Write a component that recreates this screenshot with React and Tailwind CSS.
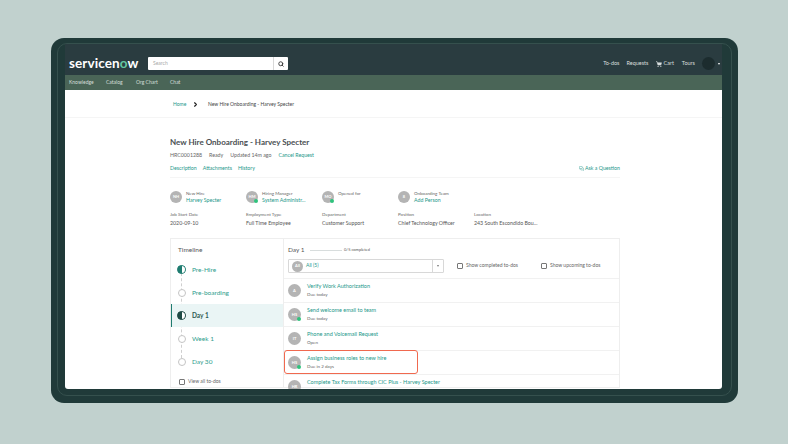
import { Search, ShoppingCart, ChevronRight, MessagesSquare } from 'lucide-react';

const people = [
  { initials: 'NH', label: 'New Hire', value: 'Harvey Specter', online: false },
  { initials: 'HM', label: 'Hiring Manager', value: 'System Administr...', online: true },
  { initials: 'MO', label: 'Opened for', value: '', online: true },
  { initials: '8', label: 'Onboarding Team', value: 'Add Person', online: false },
];

const facts = [
  { label: 'Job Start Date', value: '2020-09-10' },
  { label: 'Employment Type', value: 'Full Time Employee' },
  { label: 'Department', value: 'Customer Support' },
  { label: 'Position', value: 'Chief Technology Officer' },
  { label: 'Location', value: '243 South Escondido Bou...' },
];

const stages = [
  { name: 'Pre-Hire', state: 'half' },
  { name: 'Pre-boarding', state: 'empty' },
  { name: 'Day 1', state: 'active' },
  { name: 'Week 1', state: 'empty' },
  { name: 'Day 30', state: 'empty' },
];

const todos = [
  { initials: 'A', title: 'Verify Work Authorization', sub: 'Due today', online: false },
  { initials: 'HS', title: 'Send welcome email to team', sub: 'Due today', online: true },
  { initials: 'IT', title: 'Phone and Voicemail Request', sub: 'Open', online: false },
  { initials: 'HS', title: 'Assign business roles to new hire', sub: 'Due in 2 days', online: true, highlight: true },
  { initials: 'HR', title: 'Complete Tax Forms through CIC Plus - Harvey Specter', sub: 'Due today', online: false },
];

const Avatar = ({ initials, online, size = 'w-[12px] h-[12px]' }) => (
  <div className={`relative shrink-0 rounded-full bg-[#b4b4b4] text-white flex items-center justify-center text-[4px] font-bold ${size}`}>
    {initials}
    {online && <span className="absolute right-0 bottom-0 w-[4px] h-[4px] rounded-full bg-[#2fc27c]" />}
  </div>
);

const StageDot = ({ state }) => {
  if (state === 'empty') {
    return (
      <span className="relative z-10 w-[9px] flex justify-center">
        <span className="block w-[8px] h-[8px] rounded-full border border-[#c4c4c4] bg-white" />
      </span>
    );
  }
  const color = state === 'active' ? 'bg-[#1f4a45] border-[#1f4a45]' : 'bg-[#1f7c70] border-[#1f7c70]';
  return (
    <span className={`relative z-10 block w-[9px] h-[9px] rounded-full border-[1.5px] overflow-hidden ${color}`}>
      <span className="absolute right-0 top-0 bottom-0 w-1/2 bg-white" />
    </span>
  );
};

export default function App() {
  return (
    <div className="w-[788px] h-[444px] overflow-hidden bg-[#c1d1ce] pt-[38px] pl-[51px] font-['Lato','Open_Sans',sans-serif]">
      {/* Bezel */}
      <div className="w-[687px] h-[365px] rounded-[13px] bg-[#203a39] pt-[5px] px-[6px] pb-[7px]">
        <div className="h-full rounded-[10px] border border-[#35504d] pl-[7px] pr-[9px] pb-[6px]">
          <div className="h-full overflow-hidden rounded-b-[3px] bg-white flex flex-col">
            {/* Header */}
            <div className="h-[31px] shrink-0 bg-[#2a3c40] flex items-center pt-[8px] pl-[4px] pr-[2px]">
              <div className="w-[79px] text-white text-[13.5px] leading-none font-bold tracking-[0.1px]">
                servicen<span className="text-[#63c7a0]">o</span>w
              </div>
              <div className="w-[140px] h-[13px] bg-white rounded-[1px] flex items-center">
                <span className="flex-1 pl-[5px] text-[5px] text-[#a8a8a8]">Search</span>
                <span className="w-[15px] h-full border-l border-[#d8d8d8] flex items-center justify-center">
                  <Search className="w-[6px] h-[6px] text-[#333]" strokeWidth={3.5} />
                </span>
              </div>
              <div className="ml-auto flex items-center text-[5.5px] text-[#d9dfdf]">
                <span>To-dos</span>
                <span className="ml-[7px]">Requests</span>
                <span className="ml-[8px] flex items-center gap-[1px]">
                  <ShoppingCart className="w-[6px] h-[6px]" fill="currentColor" />
                  Cart
                </span>
                <span className="ml-[8px]">Tours</span>
                <span className="ml-[7px] w-[13px] h-[13px] rounded-full bg-[#1c2c2e]" />
                <span className="ml-[3px] w-0 h-0 border-x-[1.5px] border-x-transparent border-t-[2px] border-t-white" />
              </div>
            </div>

            {/* Nav */}
            <div className="h-[15px] shrink-0 bg-[#4a6557] flex items-center pt-[1px] pl-[4px] text-[5px] text-[#d5dfd9]">
              <span className="w-[37px]">Knowledge</span>
              <span className="w-[30px]">Catalog</span>
              <span className="w-[34px]">Org Chart</span>
              <span>Chat</span>
            </div>

            {/* Breadcrumb */}
            <div className="h-[28px] shrink-0 border-b border-[#f5f5f5] flex items-center pl-[108px] pt-[2px] text-[5px] text-[#444]">
              <span className="w-[19px] text-[#23978a]">Home</span>
              <ChevronRight className="w-[7px] h-[7px] text-[#222]" strokeWidth={4} />
              <span className="ml-[9px]">New Hire Onboarding - Harvey Specter</span>
            </div>

            {/* Record */}
            <div className="w-[450px] ml-[105px]">
              <h1 className="mt-[18px] text-[8px] leading-[12px] font-bold text-[#4a5052]">
                New Hire Onboarding - Harvey Specter
              </h1>
              <div className="mt-[3px] flex gap-[7px] text-[5.25px] leading-[8px] text-[#666]">
                <span>HRC0001288</span>
                <span>Ready</span>
                <span>Updated 14m ago</span>
                <span className="text-[#23978a]">Cancel Request</span>
              </div>
              <div className="mt-[5px] pb-[5px] border-b border-[#f5f5f5] flex items-center gap-[6px] text-[5.25px] leading-[8px] text-[#23978a]">
                <span>Description</span>
                <span>Attachments</span>
                <span>History</span>
                <span className="ml-auto flex items-center gap-[1px]">
                  <MessagesSquare className="w-[5px] h-[5px]" />
                  Ask a Question
                </span>
              </div>

              {/* People */}
              <div className="mt-[12px] flex">
                {people.map((p) => (
                  <div key={p.label} className="w-[76px] flex items-center gap-[4px]">
                    <Avatar initials={p.initials} online={p.online} />
                    <div className="text-[4.5px] leading-[7px] text-[#666]">
                      <div>{p.label}</div>
                      <div className="text-[5.25px] text-[#23978a] whitespace-nowrap">{p.value || '\u00a0'}</div>
                    </div>
                  </div>
                ))}
              </div>
              <div className="mt-[7px] flex">
                {facts.map((f) => (
                  <div key={f.label} className="w-[76px] text-[4.5px] leading-[7px] text-[#666] whitespace-nowrap">
                    <div>{f.label}</div>
                    <div className="mt-[2px] text-[5.25px] text-[#555]">{f.value}</div>
                  </div>
                ))}
              </div>

              {/* To-do card */}
              <div className="mt-[11px] h-[150px] border border-[#eeeeee] flex">
                <div className="w-[113px] shrink-0 border-r border-[#eeeeee]">
                  <div className="pl-[7px] pt-[6px] text-[6.5px] leading-[9px] text-[#555]">Timeline</div>
                  <div className="relative mt-[4px]">
                    <div className="absolute left-[10px] top-[10px] h-[90px] border-l border-dashed border-[#cfcfcf]" />
                    {stages.map((s) => (
                      <div
                        key={s.name}
                        className={`relative h-[23px] flex items-center gap-[6px] text-[6.5px] ${
                          s.state === 'active' ? 'bg-[#eaf5f5] border-l border-[#1f7c70] pl-[5px] text-[#2f5a52] font-bold' : 'pl-[6px] text-[#2f9d8d]'
                        }`}
                      >
                        <StageDot state={s.state} />
                        {s.name}
                      </div>
                    ))}
                  </div>
                  <div className="mt-[5px] pl-[8px] flex items-center gap-[3px] text-[5px] text-[#666]">
                    <span className="w-[6px] h-[6px] border border-[#777] rounded-[1px]" />
                    View all to-dos
                  </div>
                </div>

                <div className="flex-1 min-w-0">
                  <div className="pl-[4px] pt-[7px] flex items-center h-[15px] text-[#555]">
                    <span className="text-[6.5px] w-[22px]">Day 1</span>
                    <span className="w-[32px] h-[1px] bg-[#d8dddd]" />
                    <span className="ml-[2px] text-[4px]">0/5 completed</span>
                  </div>
                  <div className="mt-[5px] pl-[4px] flex items-center">
                    <div className="w-[156px] h-[14px] border border-[#d8d8d8] rounded-[1px] flex items-center">
                      <div className="flex-1 flex items-center gap-[3px] pl-[3px] text-[5px] text-[#23978a]">
                        <Avatar initials="All" size="w-[11px] h-[11px]" />
                        All (5)
                      </div>
                      <span className="w-[11px] h-full border-l border-[#d8d8d8] flex items-center justify-center">
                        <span className="w-0 h-0 border-x-[1.5px] border-x-transparent border-t-[2px] border-t-[#777]" />
                      </span>
                    </div>
                    <label className="ml-[13px] w-[84px] flex items-center gap-[3px] text-[5px] text-[#666]">
                      <span className="w-[6px] h-[6px] border border-[#777] rounded-[1px]" />
                      Show completed to-dos
                    </label>
                    <label className="flex items-center gap-[3px] text-[5px] text-[#666]">
                      <span className="w-[6px] h-[6px] border border-[#777] rounded-[1px]" />
                      Show upcoming to-dos
                    </label>
                  </div>
                  <div className="mt-[5px]">
                    {todos.map((t) => (
                      <div key={t.title} className="relative h-[24px] border-t border-[#f1f1f1] pl-[4px] flex items-center gap-[6px]">
                        <Avatar initials={t.initials} online={t.online} size="w-[13px] h-[13px]" />
                        <div className="leading-[7px]">
                          <div className="text-[5.5px] text-[#23978a] whitespace-nowrap">{t.title}</div>
                          <div className="mt-[1px] text-[4.5px] text-[#666]">{t.sub}</div>
                        </div>
                        {t.highlight && (
                          <div className="absolute left-0 -top-px w-[134px] h-[24px] border border-[#f0694f] rounded-[3px]" />
                        )}
                      </div>
                    ))}
                  </div>
                </div>
              </div>
            </div>
          </div>
        </div>
      </div>
    </div>
  );
}
